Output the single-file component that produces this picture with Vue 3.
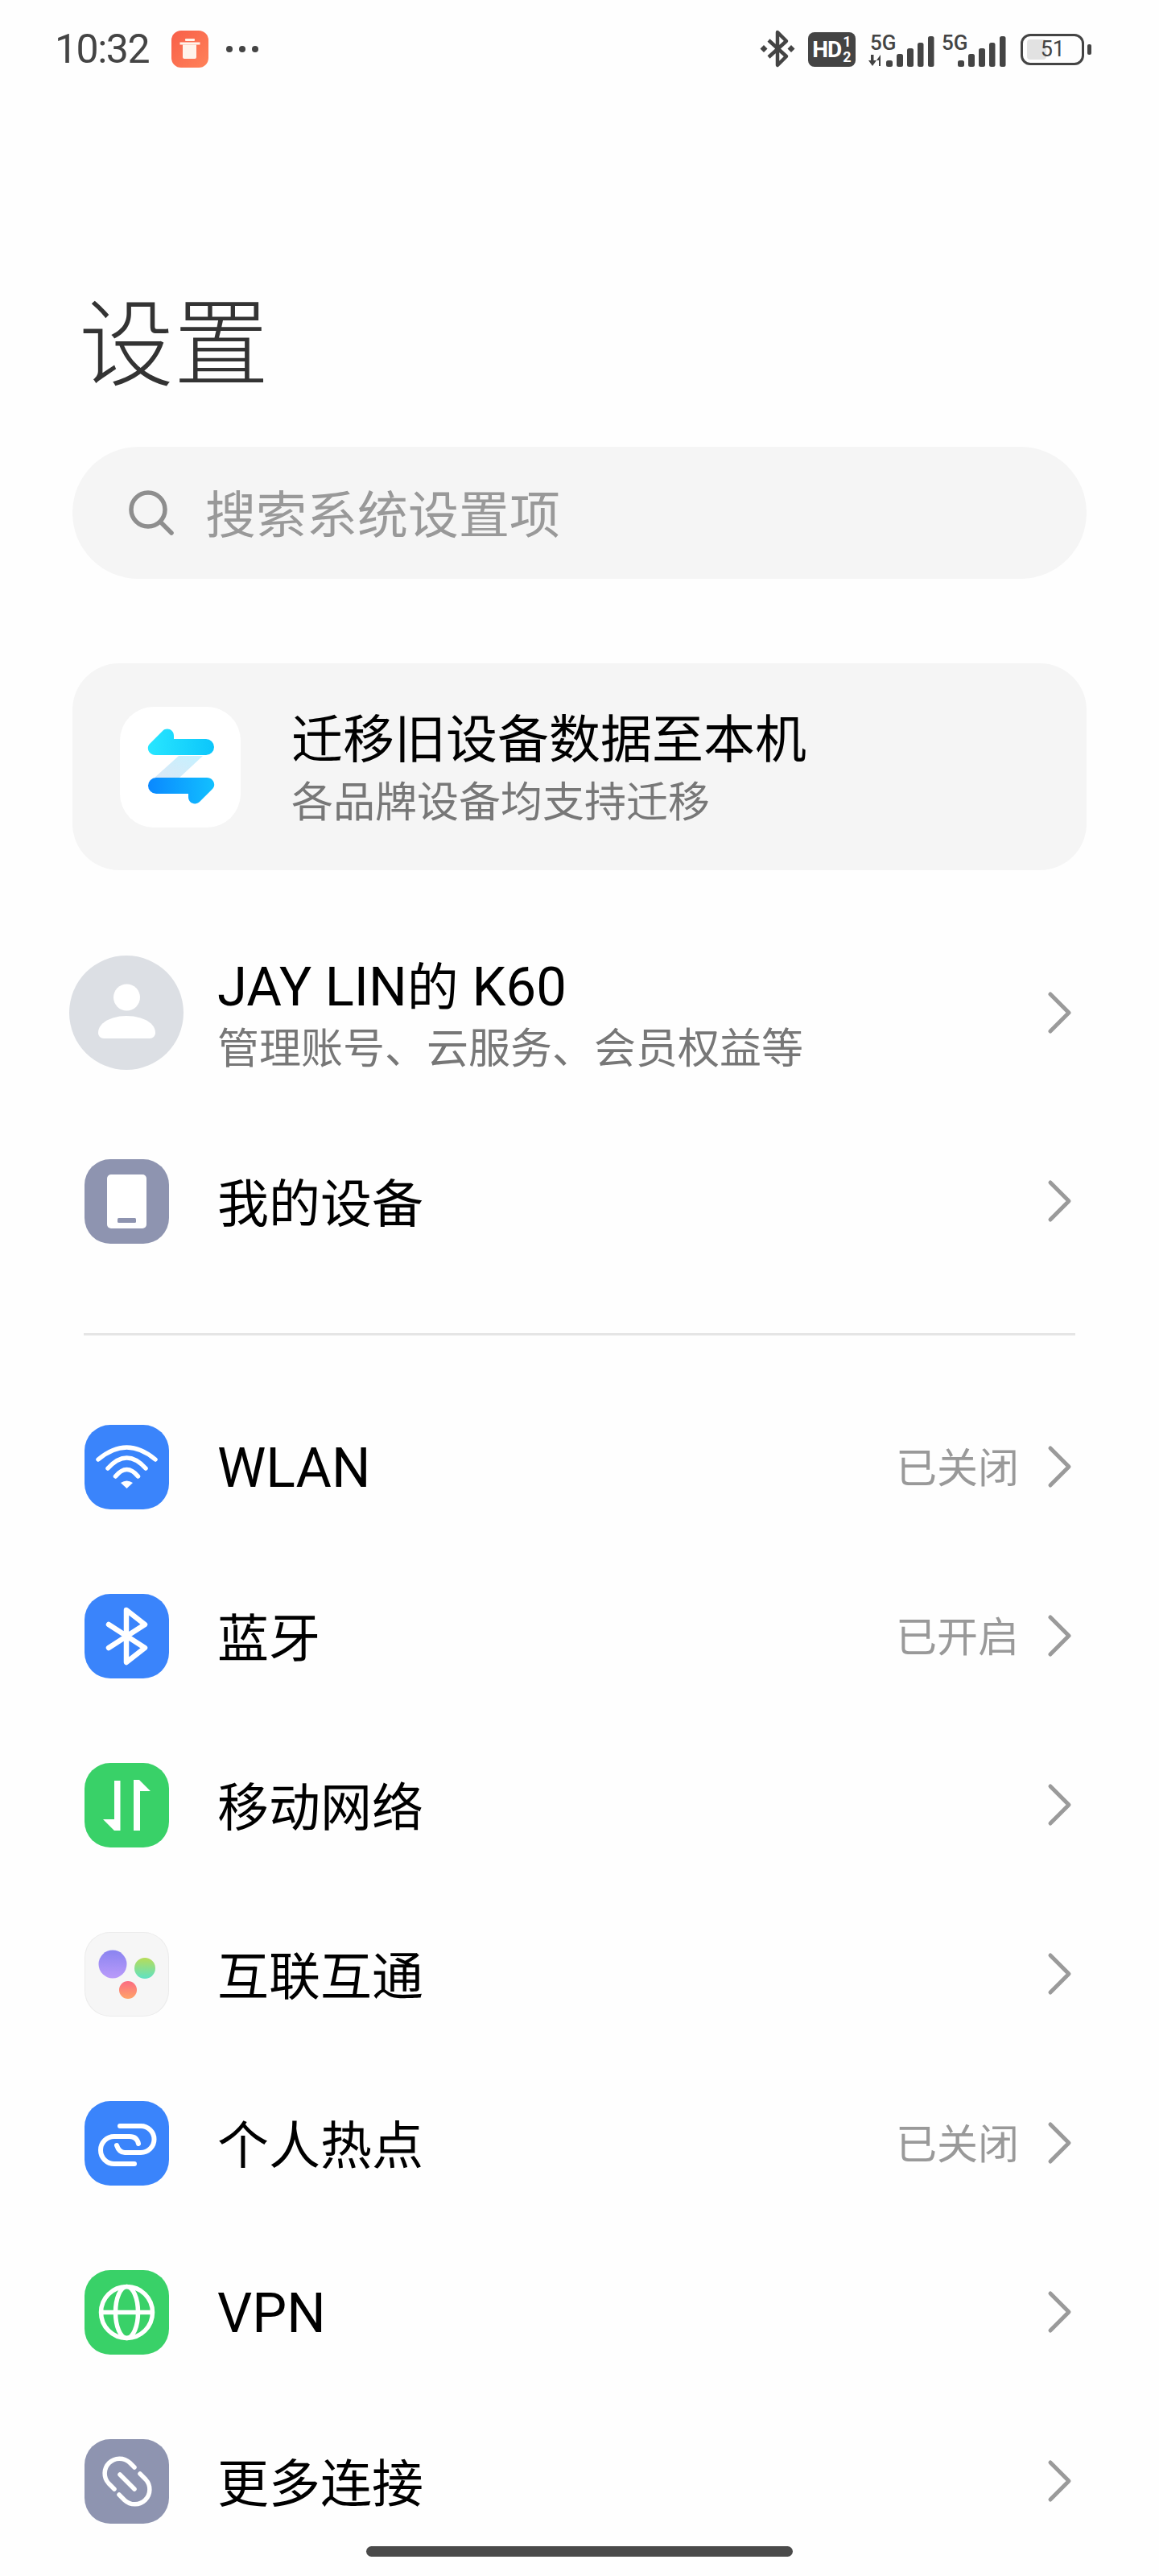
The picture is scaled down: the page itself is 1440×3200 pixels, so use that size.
<template>
  <div class="page">
    <div class="status">
      <div class="status-left">
        <span class="time">10:32</span>
        <svg class="notice" width="46" height="46" viewBox="0 0 46 46">
          <defs>
            <linearGradient id="noticeBg" x1="0" y1="0" x2="1" y2="1">
              <stop offset="0" stop-color="#f85f49" />
              <stop offset="1" stop-color="#ff8259" />
            </linearGradient>
          </defs>
          <rect width="46" height="46" rx="12" fill="url(#noticeBg)" />
          <rect x="17" y="10" width="12" height="3" rx="1" fill="#fff3ea" />
          <rect x="10.500" y="14.500" width="25" height="3" fill="#fff3ea" />
          <path d="M14 17.500h17V33a2 2 0 0 1-2 2H16a2 2 0 0 1-2-2Z" fill="#fff3ea" />
        </svg>
        <div class="dots"><i></i><i></i><i></i></div>
      </div>
      <div class="status-right">
        <svg width="44" height="50" viewBox="0 0 44 50" fill="none">
          <path d="M11 14 33 34 22 45V4L33 15 11 35" stroke="#444" stroke-width="4.500" stroke-linejoin="round" />
          <path d="M5 20l4.500 4.500L5 29 .5 24.500ZM39 20l4.500 4.500L39 29l-4.500-4.500Z" fill="#444" />
        </svg>
        <div class="hd">
          <span class="hd-main">HD</span>
          <span class="hd-sim"><b>1</b><b>2</b></span>
        </div>
        <svg class="net" width="84" height="54" viewBox="0 -12 84 54">
          <text x="4" y="20" class="net-text">5G</text>
          <path d="M5 26h3.500v7H12l-5 7-5-7h3ZM15 40V33h-3l5-7 0 14Z" fill="#444" />
          <rect x="24" y="33" width="8" height="8" rx="2.500" fill="#444" />
          <rect x="37" y="25" width="8" height="16" rx="2.500" fill="#444" />
          <rect x="50" y="18" width="8" height="23" rx="2.500" fill="#444" />
          <rect x="63" y="11" width="7.500" height="30" rx="2.500" fill="#444" />
          <rect x="76" y="3" width="7.500" height="38" rx="2.500" fill="#444" />
        </svg>
        <svg class="net" width="82" height="54" viewBox="0 -12 82 54">
          <text x="1" y="20" class="net-text">5G</text>
          <rect x="21" y="33" width="8" height="8" rx="2.500" fill="#444" />
          <rect x="34" y="25" width="8" height="16" rx="2.500" fill="#444" />
          <rect x="47" y="18" width="8" height="23" rx="2.500" fill="#444" />
          <rect x="60" y="11" width="7.500" height="30" rx="2.500" fill="#444" />
          <rect x="73" y="3" width="7.500" height="38" rx="2.500" fill="#444" />
        </svg>
        <div class="battery">
          <div class="battery-body">
            <div class="battery-fill"></div>
            <span class="battery-num">51</span>
          </div>
          <div class="battery-cap"></div>
        </div>
      </div>
    </div>

    <h1 class="title">设置</h1>

    <div class="search">
      <svg width="58" height="58" viewBox="0 0 58 58" fill="none" stroke="#8e8e8e" stroke-width="5.500">
        <circle cx="25" cy="25" r="21" />
        <path d="M41 41 54 54" stroke-linecap="round" />
      </svg>
      <span class="search-text">搜索系统设置项</span>
    </div>

    <div class="promo">
      <div class="promo-icon">
        <svg width="150" height="150" viewBox="0 0 150 150">
          <defs>
            <linearGradient id="arrowTop" x1="0" y1="0" x2="1" y2="0">
              <stop offset="0" stop-color="#28e6ff" />
              <stop offset="1" stop-color="#0cc6fb" />
            </linearGradient>
            <linearGradient id="arrowBottom" x1="0" y1="0" x2="1" y2="0">
              <stop offset="0" stop-color="#0a88ff" />
              <stop offset="1" stop-color="#12c0ff" />
            </linearGradient>
            <linearGradient id="arrowMid" x1="1" y1="0" x2="0" y2="1">
              <stop offset="0" stop-color="#c4f1ff" />
              <stop offset="1" stop-color="#dbe8f6" />
            </linearGradient>
          </defs>
          <path d="M73 61h30L74 88H43Z" fill="url(#arrowMid)" />
          <path d="M44 60H107A10 10 0 0 0 107 40H67V36C67 28 58 25 53 30L37 46C32 51 36 60 44 60Z" fill="url(#arrowTop)" />
          <path d="M108 88H45A10 10 0 0 0 45 108H85V112C85 120 94 123 99 118L115 102C120 97 116 88 108 88Z" fill="url(#arrowBottom)" />
        </svg>
      </div>
      <div class="promo-text">
        <div class="main-text">迁移旧设备数据至本机</div>
        <div class="sub-text">各品牌设备均支持迁移</div>
      </div>
    </div>

    <div class="profile">
      <div class="avatar">
        <svg width="142" height="142" viewBox="0 0 142 142" fill="#fff">
          <circle cx="71.500" cy="52" r="16.500" />
          <path d="M36 96C36 82 55 75 71 75 88 75 107 82 107 96 107 100 104 103 100 103H43C39 103 36 100 36 96Z" />
        </svg>
      </div>
      <div class="profile-text">
        <div class="main-text"><span class="latin">JAY LIN</span>的<span class="latin"> K60</span></div>
        <div class="sub-text">管理账号、云服务、会员权益等</div>
      </div>
      <svg class="chevron" width="32" height="54" viewBox="0 0 32 54" fill="none">
        <path d="M4 4 27 27 4 50" />
      </svg>
    </div>

    <div class="row device-row">
      <div class="icon gray">
        <svg width="105" height="105" viewBox="0 0 105 105">
          <rect x="28" y="19" width="49" height="67" rx="5" fill="#fff" />
          <rect x="41" y="73" width="23" height="6" rx="1.500" fill="#8e94b0" />
        </svg>
      </div>
      <span class="row-label">我的设备</span>
      <svg class="chevron" width="32" height="54" viewBox="0 0 32 54" fill="none">
        <path d="M4 4 27 27 4 50" />
      </svg>
    </div>

    <div class="divider"></div>

    <div v-for="item in rows" :key="item.label" class="row">
      <div class="icon" :class="item.color">
        <svg width="105" height="105" viewBox="0 0 105 105" fill="none" stroke="#fff" stroke-linecap="round" stroke-linejoin="round">
          <template v-if="item.icon === 'wifi'">
            <path d="M17 43Q52.500 13 88 43M29 54Q52.500 28 76 54M38.500 64Q52.500 47 66.500 64" stroke-width="5.500" />
            <path d="M45 72Q52.500 67 60 72L52.500 79Z" fill="#fff" stroke="none" />
          </template>
          <path v-else-if="item.icon === 'bluetooth'" d="M30 38 75 67 52 85V20L75 38 30 67" stroke-width="6.500" />
          <template v-else-if="item.icon === 'mobile'">
            <path d="M37 22h7.500v62H37L23 70h14Z" fill="#fff" stroke="none" />
            <path d="M69 84h-8V21h7l14 14H69Z" fill="#fff" stroke="none" />
          </template>
          <template v-else-if="item.icon === 'connect'">
            <defs>
              <linearGradient id="dotPurple" x1="0" y1="0" x2="0" y2="1">
                <stop offset="0" stop-color="#8a84f0" />
                <stop offset="1" stop-color="#ba9bfa" />
              </linearGradient>
              <linearGradient id="dotGreen" x1="0" y1="0" x2="0" y2="1">
                <stop offset="0" stop-color="#b8dc58" />
                <stop offset="1" stop-color="#5ee2c4" />
              </linearGradient>
              <linearGradient id="dotRed" x1="0" y1="0" x2="0" y2="1">
                <stop offset="0" stop-color="#fb6c82" />
                <stop offset="1" stop-color="#ffa468" />
              </linearGradient>
            </defs>
            <circle cx="35" cy="40" r="17.500" fill="url(#dotPurple)" stroke="none" />
            <circle cx="75" cy="45" r="13" fill="url(#dotGreen)" stroke="none" />
            <circle cx="54" cy="72" r="11" fill="url(#dotRed)" stroke="none" />
          </template>
          <path v-else-if="item.icon === 'hotspot'" d="M44 31H70A16.500 16.500 0 0 1 70 64H50Q43 64 40 55M67 53Q65 44 56 44H37A17 17 0 0 0 37 78H62" stroke-width="6" />
          <template v-else-if="item.icon === 'vpn'">
            <circle cx="52.500" cy="52.500" r="32" stroke-width="5.500" />
            <ellipse cx="52.500" cy="52.500" rx="14" ry="32" stroke-width="5.500" />
            <path d="M21 52.500H84" stroke-width="5.500" />
          </template>
          <template v-else>
            <path d="M62 35 56 29A18.400 18.400 0 0 0 30 55L37 62M69 43 76 50A18.400 18.400 0 0 1 50 76L43 69" stroke-width="5.500" />
            <path d="M44 44 62 62" stroke-width="5.500" />
          </template>
        </svg>
      </div>
      <span class="row-label" :class="{ 'latin-label': item.latin }">{{ item.label }}</span>
      <span v-if="item.value" class="row-value">{{ item.value }}</span>
      <svg class="chevron" width="32" height="54" viewBox="0 0 32 54" fill="none">
        <path d="M4 4 27 27 4 50" />
      </svg>
    </div>

    <div class="home-bar"></div>
  </div>
</template>

<script setup>
const rows = [
  { label: 'WLAN', value: '已关闭', icon: 'wifi', color: 'blue', latin: true },
  { label: '蓝牙', value: '已开启', icon: 'bluetooth', color: 'blue' },
  { label: '移动网络', icon: 'mobile', color: 'green' },
  { label: '互联互通', icon: 'connect', color: 'soft' },
  { label: '个人热点', value: '已关闭', icon: 'hotspot', color: 'blue' },
  { label: 'VPN', icon: 'vpn', color: 'green', latin: true },
  { label: '更多连接', icon: 'more', color: 'gray' }
]
</script>

<style>
html,
body {
  margin: 0;
  background: #fefefe;
}
</style>

<style scoped>
.page {
  position: relative;
  width: 1440px;
  height: 3200px;
  overflow: hidden;
  background: #fefefe;
  color: #000;
  font-family: Roboto, "Noto Sans CJK SC", sans-serif;
}

.status {
  display: flex;
  justify-content: space-between;
  align-items: center;
  height: 122px;
  padding: 0 84px 0 68px;
  color: #444;
}

.status-left,
.status-right {
  display: flex;
  align-items: center;
}

.time {
  width: 145px;
  font-size: 50px;
  letter-spacing: -1.500px;
}

.dots {
  display: flex;
  gap: 8px;
  margin-left: 22px;
}

.dots i {
  width: 8px;
  height: 8px;
  border-radius: 50%;
  background: #444;
}

.status-right svg {
  display: block;
}

.hd {
  display: flex;
  align-items: center;
  justify-content: center;
  gap: 2px;
  width: 59px;
  height: 43px;
  margin: 0 14px 0 16px;
  border-radius: 8px;
  background: #444;
  color: #fff;
  font-weight: 700;
}

.hd-main {
  font-size: 28px;
  letter-spacing: -1px;
}

.hd-sim {
  display: flex;
  flex-direction: column;
  font-size: 18px;
  line-height: 19px;
}

.hd-sim b {
  font-weight: 700;
}

.net {
  margin-top: -10px;
  margin-bottom: -2px;
}

.net-text {
  font-size: 26px;
  font-weight: 500;
  fill: #444;
}

.net + .net {
  margin-left: 8px;
}

.battery {
  display: flex;
  align-items: center;
  gap: 4px;
  margin-left: 17px;
}

.battery-body {
  position: relative;
  display: flex;
  align-items: center;
  justify-content: flex-end;
  box-sizing: border-box;
  width: 79px;
  height: 39px;
  padding-right: 21px;
  border: 3.500px solid #444;
  border-radius: 12px;
}

.battery-fill {
  position: absolute;
  left: 5px;
  top: 4px;
  bottom: 4px;
  width: 24px;
  border-radius: 4px;
  background: #e2e2e2;
}

.battery-num {
  position: relative;
  font-size: 27px;
  line-height: 1;
}

.battery-cap {
  width: 5px;
  height: 13px;
  border-radius: 2px;
  background: #444;
}

.title {
  margin: 238px 0 0 98px;
  font-size: 118px;
  line-height: 140px;
  font-weight: 300;
  color: #333;
}

.search {
  display: flex;
  align-items: center;
  gap: 38px;
  height: 164px;
  margin: 55px 90px 0;
  padding-left: 69px;
  border-radius: 82px;
  background: #f5f5f5;
}

.search-text {
  padding-bottom: 6px;
  font-size: 63px;
  color: #999;
}

.promo {
  display: flex;
  align-items: center;
  gap: 63px;
  height: 257px;
  margin: 105px 90px 0;
  padding-left: 59px;
  border-radius: 58px;
  background: #f5f5f5;
}

.promo-icon {
  width: 150px;
  height: 150px;
  border-radius: 42px;
  background: #fff;
}

.promo-text {
  padding-top: 15px;
}

.profile-text {
  flex: 1;
  padding-top: 13px;
}

.main-text {
  font-size: 64px;
  line-height: 76px;
}

.latin {
  font-size: 67px;
}

.sub-text {
  font-size: 52px;
  line-height: 76px;
  color: #777;
}

.promo-text .sub-text {
  line-height: 80px;
}

.profile {
  display: flex;
  align-items: center;
  height: 210px;
  margin-top: 72px;
  padding: 0 107px 0 86px;
}

.avatar {
  width: 142px;
  height: 142px;
  margin-right: 42px;
  border-radius: 50%;
  background: #dcdfe4;
}

.row {
  display: flex;
  align-items: center;
  height: 210px;
  padding: 0 107px 0 105px;
}

.device-row {
  margin-top: 24px;
}

.divider {
  height: 3px;
  margin: 59px 104px 58px;
  background: #e5e5e5;
}

.icon {
  width: 105px;
  height: 105px;
  margin-right: 60px;
  border-radius: 32px;
  box-sizing: border-box;
}

.icon svg {
  display: block;
}

.blue {
  background: #3a84fb;
}

.green {
  background: #39d168;
}

.gray {
  background: #8e94b0;
}

.soft {
  background: #f6f6f6;
  box-shadow: inset 0 0 0 1px #ececec;
}

.row-label {
  flex: 1;
  padding-bottom: 4px;
  font-size: 64px;
}

.latin-label {
  padding-top: 4px;
  padding-bottom: 0;
  font-size: 68px;
}

.row-value {
  margin-right: 35px;
  padding-bottom: 4px;
  font-size: 51px;
  color: #999;
}

.chevron {
  flex: none;
}

.chevron path {
  stroke: #9a9a9a;
  stroke-width: 5px;
  stroke-linecap: round;
  stroke-linejoin: round;
}

.home-bar {
  position: absolute;
  left: 455px;
  bottom: 24px;
  width: 530px;
  height: 13px;
  border-radius: 7px;
  background: #4a4a4a;
}
</style>
